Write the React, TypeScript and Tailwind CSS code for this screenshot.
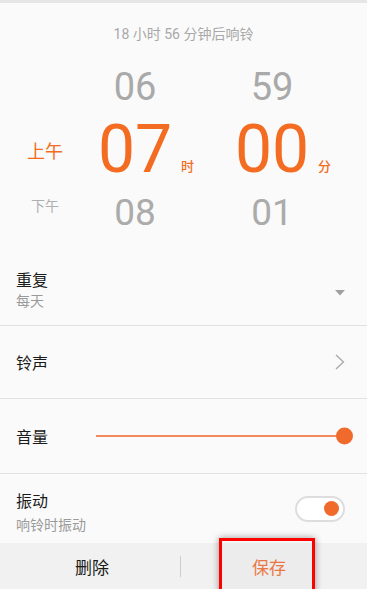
import React from "react";

const cjk = { fontFamily: '"Noto Sans CJK SC", "Noto Sans", sans-serif' };
const num = { fontFamily: 'Roboto, "Noto Sans CJK SC", sans-serif' };

export default function App() {
  return (
    <div
      className="relative w-[367px] h-[589px] overflow-hidden bg-[#fafafa] flex flex-col"
      style={cjk}
    >
      <div className="h-[3px] bg-[#e6e6e6] shrink-0" />
      {/* header */}
      <div
        className="pt-[22px] text-center text-[14px] leading-[18px] text-[#a8a8a8]"
        style={num}
      >
        18 小时 56 分钟后响铃
      </div>

      {/* picker */}
      <div className="mt-[12px] grid grid-cols-[88px_94px_43px_94px] grid-rows-[63px_63px_62px]">
        {/* row 1 */}
        <div />
        <div className="flex items-center justify-center text-[38px] leading-none text-[#a9a9a9]" style={num}>
          06
        </div>
        <div />
        <div className="flex items-center justify-center text-[38px] leading-none text-[#a9a9a9]" style={num}>
          59
        </div>
        {/* row 2 */}
        <div className="flex items-center justify-center pl-[2px] text-[18px] leading-none text-[#f36c21]">
          上午
        </div>
        <div className="flex items-center justify-center">
          <span className="relative text-[66px] leading-none text-[#f36c21]" style={num}>
            07
            <span
              className="absolute left-[calc(100%+9px)] bottom-[11px] text-[13px] font-medium leading-none whitespace-nowrap"
              style={cjk}
            >
              时
            </span>
          </span>
        </div>
        <div />
        <div className="flex items-center justify-center">
          <span className="relative text-[66px] leading-none text-[#f36c21]" style={num}>
            00
            <span
              className="absolute left-[calc(100%+9px)] bottom-[11px] text-[13px] font-medium leading-none whitespace-nowrap"
              style={cjk}
            >
              分
            </span>
          </span>
        </div>
        {/* row 3 */}
        <div className="flex items-center justify-center pb-[14px] pl-[2px] text-[14px] leading-none text-[#b0b0b0]">
          下午
        </div>
        <div className="flex items-center justify-center pt-[1px] text-[37px] leading-none text-[#ababab]" style={num}>
          08
        </div>
        <div />
        <div className="flex items-center justify-center pt-[1px] text-[37px] leading-none text-[#ababab]" style={num}>
          01
        </div>
      </div>

      {/* 重复 */}
      <div className="flex items-center justify-between pl-[16px] pr-[22px] pt-[25px] pb-[15px]">
        <div className="flex flex-col">
          <span className="text-[16px] leading-[22px] text-[#1a1a1a]">重复</span>
          <span className="text-[14px] leading-[20px] text-[#9a9a9a]">每天</span>
        </div>
        <svg width="10" height="6" viewBox="0 0 10 6" className="mt-[8px]">
          <path d="M0 0 L10 0 L5 5.5 Z" fill="#a0a0a0" />
        </svg>
      </div>
      <div className="h-px bg-[#e2e2e2]" />

      {/* 铃声 */}
      <div className="h-[72px] flex items-center justify-between pl-[16px] pr-[22px]">
        <span className="text-[16px] leading-[22px] text-[#1a1a1a]">铃声</span>
        <svg width="10" height="16" viewBox="0 0 10 16">
          <path d="M1 1 L8.5 8 L1 15" fill="none" stroke="#a8a8a8" strokeWidth="1.3" />
        </svg>
      </div>
      <div className="h-px bg-[#e2e2e2]" />

      {/* 音量 */}
      <div className="h-[74px] flex items-center pl-[16px] pr-[22px]">
        <span className="w-[80px] text-[16px] leading-[22px] text-[#1a1a1a]">音量</span>
        <div className="relative flex-1 h-[2px] bg-[#f28a5e]">
          <div className="absolute right-[-8px] top-1/2 -translate-y-1/2 w-[17px] h-[17px] rounded-full bg-[#f06a2c]" />
        </div>
      </div>
      <div className="h-px bg-[#e2e2e2]" />

      {/* 振动 */}
      <div className="flex items-center justify-between pl-[16px] pr-[22px] pt-[15px] pb-[9px]">
        <div className="flex flex-col">
          <span className="text-[16px] leading-[22px] text-[#1a1a1a]">振动</span>
          <span className="mt-[3px] text-[14px] leading-[20px] text-[#9a9a9a]">响铃时振动</span>
        </div>
        <div className="mt-[-6px] w-[50px] h-[26px] rounded-full border-2 border-[#dddddd] bg-white flex items-center justify-end pr-[4px]">
          <div className="w-[15px] h-[15px] rounded-full bg-[#f06a2c]" />
        </div>
      </div>

      {/* bottom bar */}
      <div className="flex-1 bg-[#f1f1f1] flex items-center">
        <div className="w-[180px] pl-[4px] text-center text-[17px] leading-none text-[#1a1a1a]">删除</div>
        <div className="w-px h-[21px] bg-[#cccccc]" />
        <div className="w-[176px] text-center text-[17px] leading-none text-[#f07a45]">保存</div>
      </div>

      {/* annotation box */}
      <div className="absolute left-[219px] top-[538px] w-[96px] h-[56px] border-[3px] border-[#ff0000] bg-[rgba(0,0,0,0.02)] shadow-[0_0_7px_rgba(0,0,0,0.4)]" />
    </div>
  );
}
